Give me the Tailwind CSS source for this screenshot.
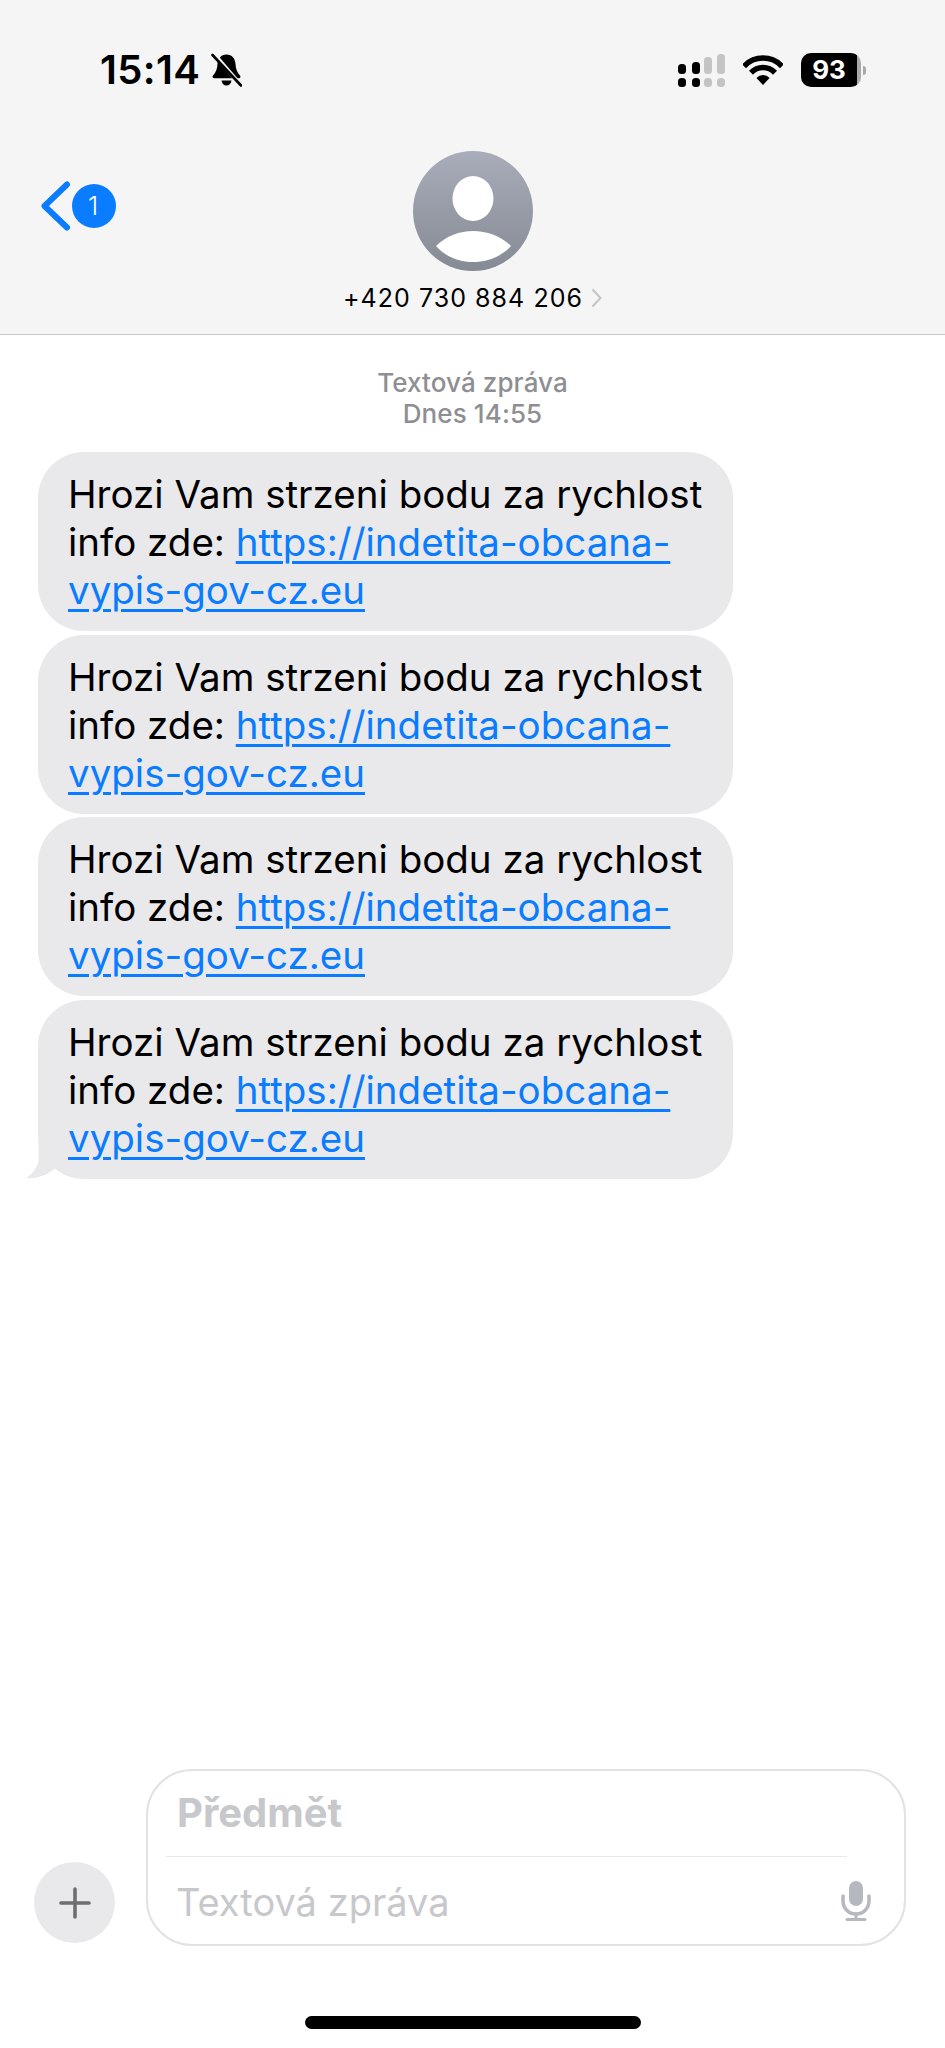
<!DOCTYPE html>
<html lang="cs">
<head>
    <meta charset="UTF-8">
    <title>Zprávy</title>
    <script src="https://cdn.jsdelivr.net/npm/@tailwindcss/browser@4"></script>
</head>
<body class="bg-white text-black font-['Inter',sans-serif]">

<div class="w-[945px] h-[2048px] flex flex-col overflow-hidden">

    <!-- Header -->
    <header class="h-[335px] shrink-0 bg-[#f5f5f5] border-b border-[#c9c9c9] flex flex-col">

        <!-- Status bar -->
        <div class="h-[151px] shrink-0 pt-[53px] pl-[100px] pr-[79px] flex items-start justify-between">
            <div class="flex items-center gap-[11px] h-[34px]">
                <span class="text-[40px] leading-[34px] font-semibold tracking-[0.4px]">15:14</span>
                <svg class="w-[31px] h-[34px]" viewBox="0 0 31 34">
                    <path d="M15.5 1.5c-5.5 0-8.6 4-9 9.5-.3 5-1.4 8-4.5 11.5-1 1.2-.4 2.8 1.2 2.8h24.6c1.6 0 2.2-1.6 1.2-2.8-3.1-3.5-4.2-6.5-4.5-11.5-.4-5.500-3.500-9.500-9-9.500z" fill="#000"/>
                    <path d="M10.500 27.500h10c-.4 3-2.400 5-5 5s-4.600-2-5-5z" fill="#000"/>
                    <path d="M0 4.500 L27 36" stroke="#f5f5f5" stroke-width="4" transform="translate(3.500 -3)"/>
                    <path d="M1.500 2 L30 32.500" stroke="#000" stroke-width="2.600" stroke-linecap="round"/>
                </svg>
            </div>
            <div class="flex items-center h-[34px]">
                <svg class="w-[47px] h-[33px]" viewBox="0 0 47 33">
                    <rect x="0" y="10" width="8" height="10" rx="3.500" fill="#000"/>
                    <rect x="14" y="8" width="8" height="12" rx="3.500" fill="#000"/>
                    <rect x="26" y="3" width="8" height="17" rx="3.500" fill="#c4c4c4"/>
                    <rect x="39" y="0" width="8" height="20" rx="3.500" fill="#c4c4c4"/>
                    <rect x="0" y="24" width="8" height="9" rx="3.500" fill="#000"/>
                    <rect x="14" y="24" width="8" height="9" rx="3.500" fill="#000"/>
                    <rect x="26" y="24" width="8" height="9" rx="3.500" fill="#c4c4c4"/>
                    <rect x="39" y="24" width="8" height="9" rx="3.500" fill="#c4c4c4"/>
                </svg>
                <svg class="w-[40px] h-[30px] ml-[18px]" viewBox="0 0 40 30">
                    <path d="M1 11.300A26 26 0 0 1 39 11.300" fill="none" stroke="#000" stroke-width="5.500"/>
                    <path d="M8 17.750A16.500 16.500 0 0 1 32 17.750" fill="none" stroke="#000" stroke-width="5.500"/>
                    <path d="M20 30L13.400 22.900A9 9 0 0 1 26.600 22.900Z" fill="#000"/>
                </svg>
                <div class="ml-[18px] flex items-center">
                    <div class="w-[60px] h-[34px] rounded-[10px] bg-[linear-gradient(to_right,#000_0,#000_56px,#a8a8a8_56px)] text-white text-[26px] leading-[34px] font-bold text-center pr-[4px]">93</div>
                    <div class="w-[3px] h-[9px] ml-[2px] rounded-r-full bg-[#a8a8a8]"></div>
                </div>
            </div>
        </div>

        <!-- Contact -->
        <div class="relative flex flex-col items-center">
            <div class="absolute left-[41px] top-[30px] flex items-center">
                <svg class="w-[30px] h-[50px]" viewBox="0 0 30 50">
                    <path d="M26 3.500L3.500 25L26 46.500" fill="none" stroke="#0a7cff" stroke-width="6" stroke-linecap="round" stroke-linejoin="round"/>
                </svg>
                <div class="w-[44px] h-[44px] ml-[1px] pr-[2px] rounded-full bg-[#0a7cff] text-white text-[26px] leading-[44px] text-center font-light">1</div>
            </div>
            <svg class="w-[120px] h-[120px]" viewBox="0 0 120 120">
                <defs>
                    <linearGradient id="avatarGrad" x1="0" y1="0" x2="0" y2="1">
                        <stop offset="0" stop-color="#a9adb9"/>
                        <stop offset="1" stop-color="#868a95"/>
                    </linearGradient>
                </defs>
                <circle cx="60" cy="60" r="60" fill="url(#avatarGrad)"/>
                <ellipse cx="60" cy="47.500" rx="20.500" ry="22.500" fill="#fff"/>
                <path d="M23 95C33 85 47 80 60 80C74 80 88 85 98 95C88 106 74 111 60 111C46 111 33 106 23 95Z" fill="#fff"/>
            </svg>
            <div class="mt-[12px] flex items-center gap-[8px] h-[30px]">
                <span class="text-[25px] leading-[30px] tracking-[1.05px]">+420 730 884 206</span>
                <svg class="w-[11px] h-[20px]" viewBox="0 0 11 20">
                    <path d="M1.500 1.500L9.500 10L1.500 18.500" fill="none" stroke="#c4c4c6" stroke-width="2"/>
                </svg>
            </div>
        </div>
    </header>

    <!-- Messages -->
    <main class="flex-1 flex flex-col pt-[32px]">
        <div class="text-center text-[#8e8e93] text-[26px] leading-[31px] font-medium tracking-[0.1px]">
            <p>Textová zpráva</p>
            <p>Dnes 14:55</p>
        </div>

        <div class="mt-[23px] flex flex-col gap-[3.500px] pl-[38px]">
            <div class="w-[695px] h-[179px] rounded-[46px] bg-[#e9e9eb] pl-[30px] pt-[18px] text-[38.500px] leading-[48px]">
                Hrozi Vam strzeni bodu za rychlost<br>info zde: <a class="text-[#0a7cff] underline underline-offset-[5px] decoration-[2.500px]">https://indetita-obcana-<br>vypis-gov-cz.eu</a>
            </div>
            <div class="w-[695px] h-[179px] rounded-[46px] bg-[#e9e9eb] pl-[30px] pt-[18px] text-[38.500px] leading-[48px]">
                Hrozi Vam strzeni bodu za rychlost<br>info zde: <a class="text-[#0a7cff] underline underline-offset-[5px] decoration-[2.500px]">https://indetita-obcana-<br>vypis-gov-cz.eu</a>
            </div>
            <div class="w-[695px] h-[179px] rounded-[46px] bg-[#e9e9eb] pl-[30px] pt-[18px] text-[38.500px] leading-[48px]">
                Hrozi Vam strzeni bodu za rychlost<br>info zde: <a class="text-[#0a7cff] underline underline-offset-[5px] decoration-[2.500px]">https://indetita-obcana-<br>vypis-gov-cz.eu</a>
            </div>
            <div class="relative w-[695px] h-[179px] rounded-[46px] bg-[#e9e9eb] pl-[30px] pt-[18px] text-[38.500px] leading-[48px]">
                <svg class="absolute left-[-13px] bottom-0 w-[45px] h-[50px]" viewBox="0 0 45 50">
                    <path d="M13.500 0V31C13 38 7 45 1.500 49C10 50 20 47 28 41L45 30L13.500 0Z" fill="#e9e9eb"/>
                </svg>
                <span class="relative">Hrozi Vam strzeni bodu za rychlost<br>info zde: <a class="text-[#0a7cff] underline underline-offset-[5px] decoration-[2.500px]">https://indetita-obcana-<br>vypis-gov-cz.eu</a></span>
            </div>
        </div>
    </main>

    <!-- Composer -->
    <footer class="shrink-0 flex items-end pl-[34px] pb-[102px]">
        <div class="w-[81px] h-[81px] mb-[3px] rounded-full bg-[#e9e9eb] flex items-center justify-center">
            <svg class="w-[32px] h-[32px]" viewBox="0 0 32 32">
                <path d="M16 2V30M2 16H30" stroke="#6e6e73" stroke-width="3.600" stroke-linecap="round"/>
            </svg>
        </div>
        <div class="ml-[31px] w-[760px] h-[177px] rounded-[46px] border-2 border-[#e2e2e4] flex flex-col">
            <div class="h-[86px] shrink-0 ml-[18px] mr-[57px] border-b border-[#e8e8ea] pl-[11px] pt-[19px] text-[40px] leading-[46px] font-bold text-[#c7c8cb]">Předmět</div>
            <div class="flex-1 flex items-center justify-between pl-[28px] pr-[33px]">
                <span class="text-[38px] leading-[46px] text-[#c7c8cb] translate-y-[1px]">Textová zpráva</span>
                <svg class="w-[30px] h-[40px]" viewBox="0 0 30 40">
                    <rect x="8" y="0" width="14" height="25" rx="7" fill="#b6b8bf"/>
                    <path d="M2 15V20A13 13 0 0 0 28 20V15" fill="none" stroke="#b6b8bf" stroke-width="3.500" stroke-linecap="round"/>
                    <path d="M15 33V38M6 38.500H24" fill="none" stroke="#b6b8bf" stroke-width="3" stroke-linecap="round"/>
                </svg>
            </div>
        </div>
    </footer>
</div>

<!-- Home indicator -->
<div class="fixed left-[305px] top-[2016px] w-[336px] h-[13px] rounded-full bg-black"></div>

</body>
</html>
